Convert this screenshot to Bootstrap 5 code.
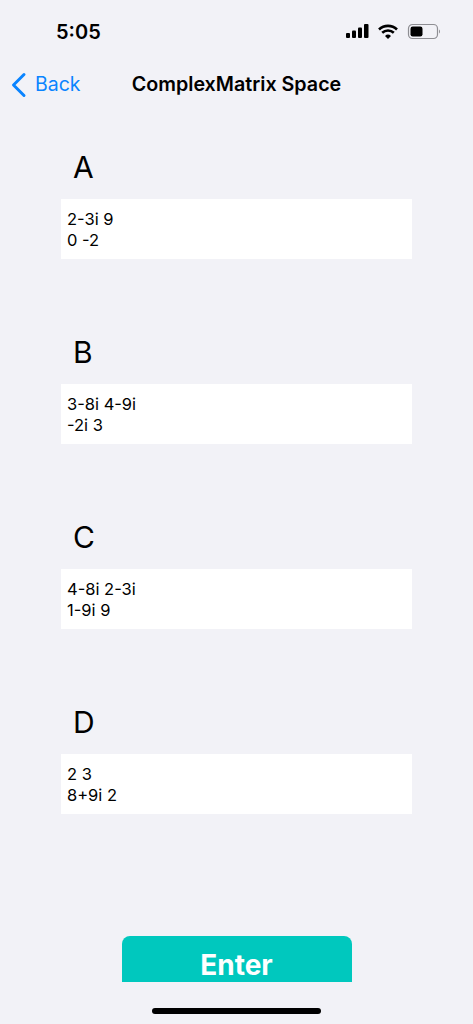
<!DOCTYPE html>
<html lang="en">
<head>
<meta charset="utf-8">
<meta name="viewport" content="width=device-width, initial-scale=1">
<link href="https://cdn.jsdelivr.net/npm/bootstrap@5.3.0/dist/css/bootstrap.min.css" rel="stylesheet">
<style>
html,body{height:100%;}
body{background:#f2f2f7;font-family:Inter,"Liberation Sans",sans-serif;color:#000;}
.screen{width:473px;height:1024px;overflow:hidden;}
.status{height:63px;padding:19px 31px 0 56px;}
.clock{font-size:20px;font-weight:600;line-height:26px;}
.navrow{height:44px;}
.backlink{left:10px;top:0;height:44px;color:#0a84ff;font-size:19.5px;text-decoration:none;gap:8px;}
.navtitle{font-size:19.7px;font-weight:600;}
.matrices{padding:29px 61px 0;}
.mblock{height:185px;}
.mlabel{font-size:30px;line-height:36px;padding:13px 0 0 12px;height:63px;}
.mbox{background:#fff;height:60px;padding:10px 6px 0;font-size:16.5px;line-height:21px;width:351px;}
.enterwrap{height:46px;margin-top:60px;}
.enterbtn{width:230px;height:46px;background:#00c8be;color:#fff;font-size:28px;font-weight:700;border:0;border-radius:8px 8px 0 0;padding:8px 0 0;line-height:42px;}
.homebar{width:169px;height:6px;background:#000;border-radius:3px;margin:26px auto 0;}
</style>
</head>
<body class="m-0">
<div class="screen d-flex flex-column">
  <div class="status d-flex justify-content-between align-items-start">
    <span class="clock">5:05</span>
    <svg width="96" height="18" viewBox="0 0 96 18" aria-hidden="true" class="mt-1">
      <rect x="0" y="10" width="4" height="5" rx="1" fill="#000"/>
      <rect x="6" y="7.500" width="4" height="7.500" rx="1" fill="#000"/>
      <rect x="12" y="4.500" width="4" height="10.500" rx="1" fill="#000"/>
      <rect x="18" y="1" width="4.500" height="14" rx="1" fill="#000"/>
      <path d="M33 6.500a13 13 0 0 1 18 0" fill="none" stroke="#000" stroke-width="2.600"/>
      <path d="M36.200 9.800a8.500 8.500 0 0 1 11.600 0" fill="none" stroke="#000" stroke-width="2.600"/>
      <path d="M39 13a4.400 4.400 0 0 1 6 0l-3 3z" fill="#000"/>
      <rect x="62.500" y="1.500" width="29" height="14" rx="4" fill="none" stroke="#8e8e93" stroke-width="1.200"/>
      <rect x="64.500" y="3.500" width="12" height="10" rx="2.200" fill="#000"/>
      <path d="M93 6.500c1.300.5 1.300 3.500 0 4z" fill="#8e8e93"/>
    </svg>
  </div>
  <div class="navrow position-relative d-flex align-items-center justify-content-center">
    <a href="#" class="backlink position-absolute d-flex align-items-center">
      <svg width="17" height="26" viewBox="0 0 17 26" aria-hidden="true"><path d="M14 2.500 3.500 13 14 23.500" fill="none" stroke="#0a84ff" stroke-width="3" stroke-linecap="round" stroke-linejoin="round"/></svg>
      <span>Back</span>
    </a>
    <span class="navtitle">ComplexMatrix Space</span>
  </div>
  <div class="matrices d-flex flex-column">
    <div class="mblock"><div class="mlabel">A</div><div class="mbox">2-3i 9<br>0 -2</div></div>
    <div class="mblock"><div class="mlabel">B</div><div class="mbox">3-8i 4-9i<br>-2i 3</div></div>
    <div class="mblock"><div class="mlabel">C</div><div class="mbox">4-8i 2-3i<br>1-9i 9</div></div>
    <div class="mblock"><div class="mlabel">D</div><div class="mbox">2 3<br>8+9i 2</div></div>
  </div>
  <div class="enterwrap d-flex justify-content-center">
    <button type="button" class="btn enterbtn">Enter</button>
  </div>
  <div class="homebar"></div>
</div>
<script src="https://cdn.jsdelivr.net/npm/bootstrap@5.3.0/dist/js/bootstrap.bundle.min.js"></script>
</body>
</html>
